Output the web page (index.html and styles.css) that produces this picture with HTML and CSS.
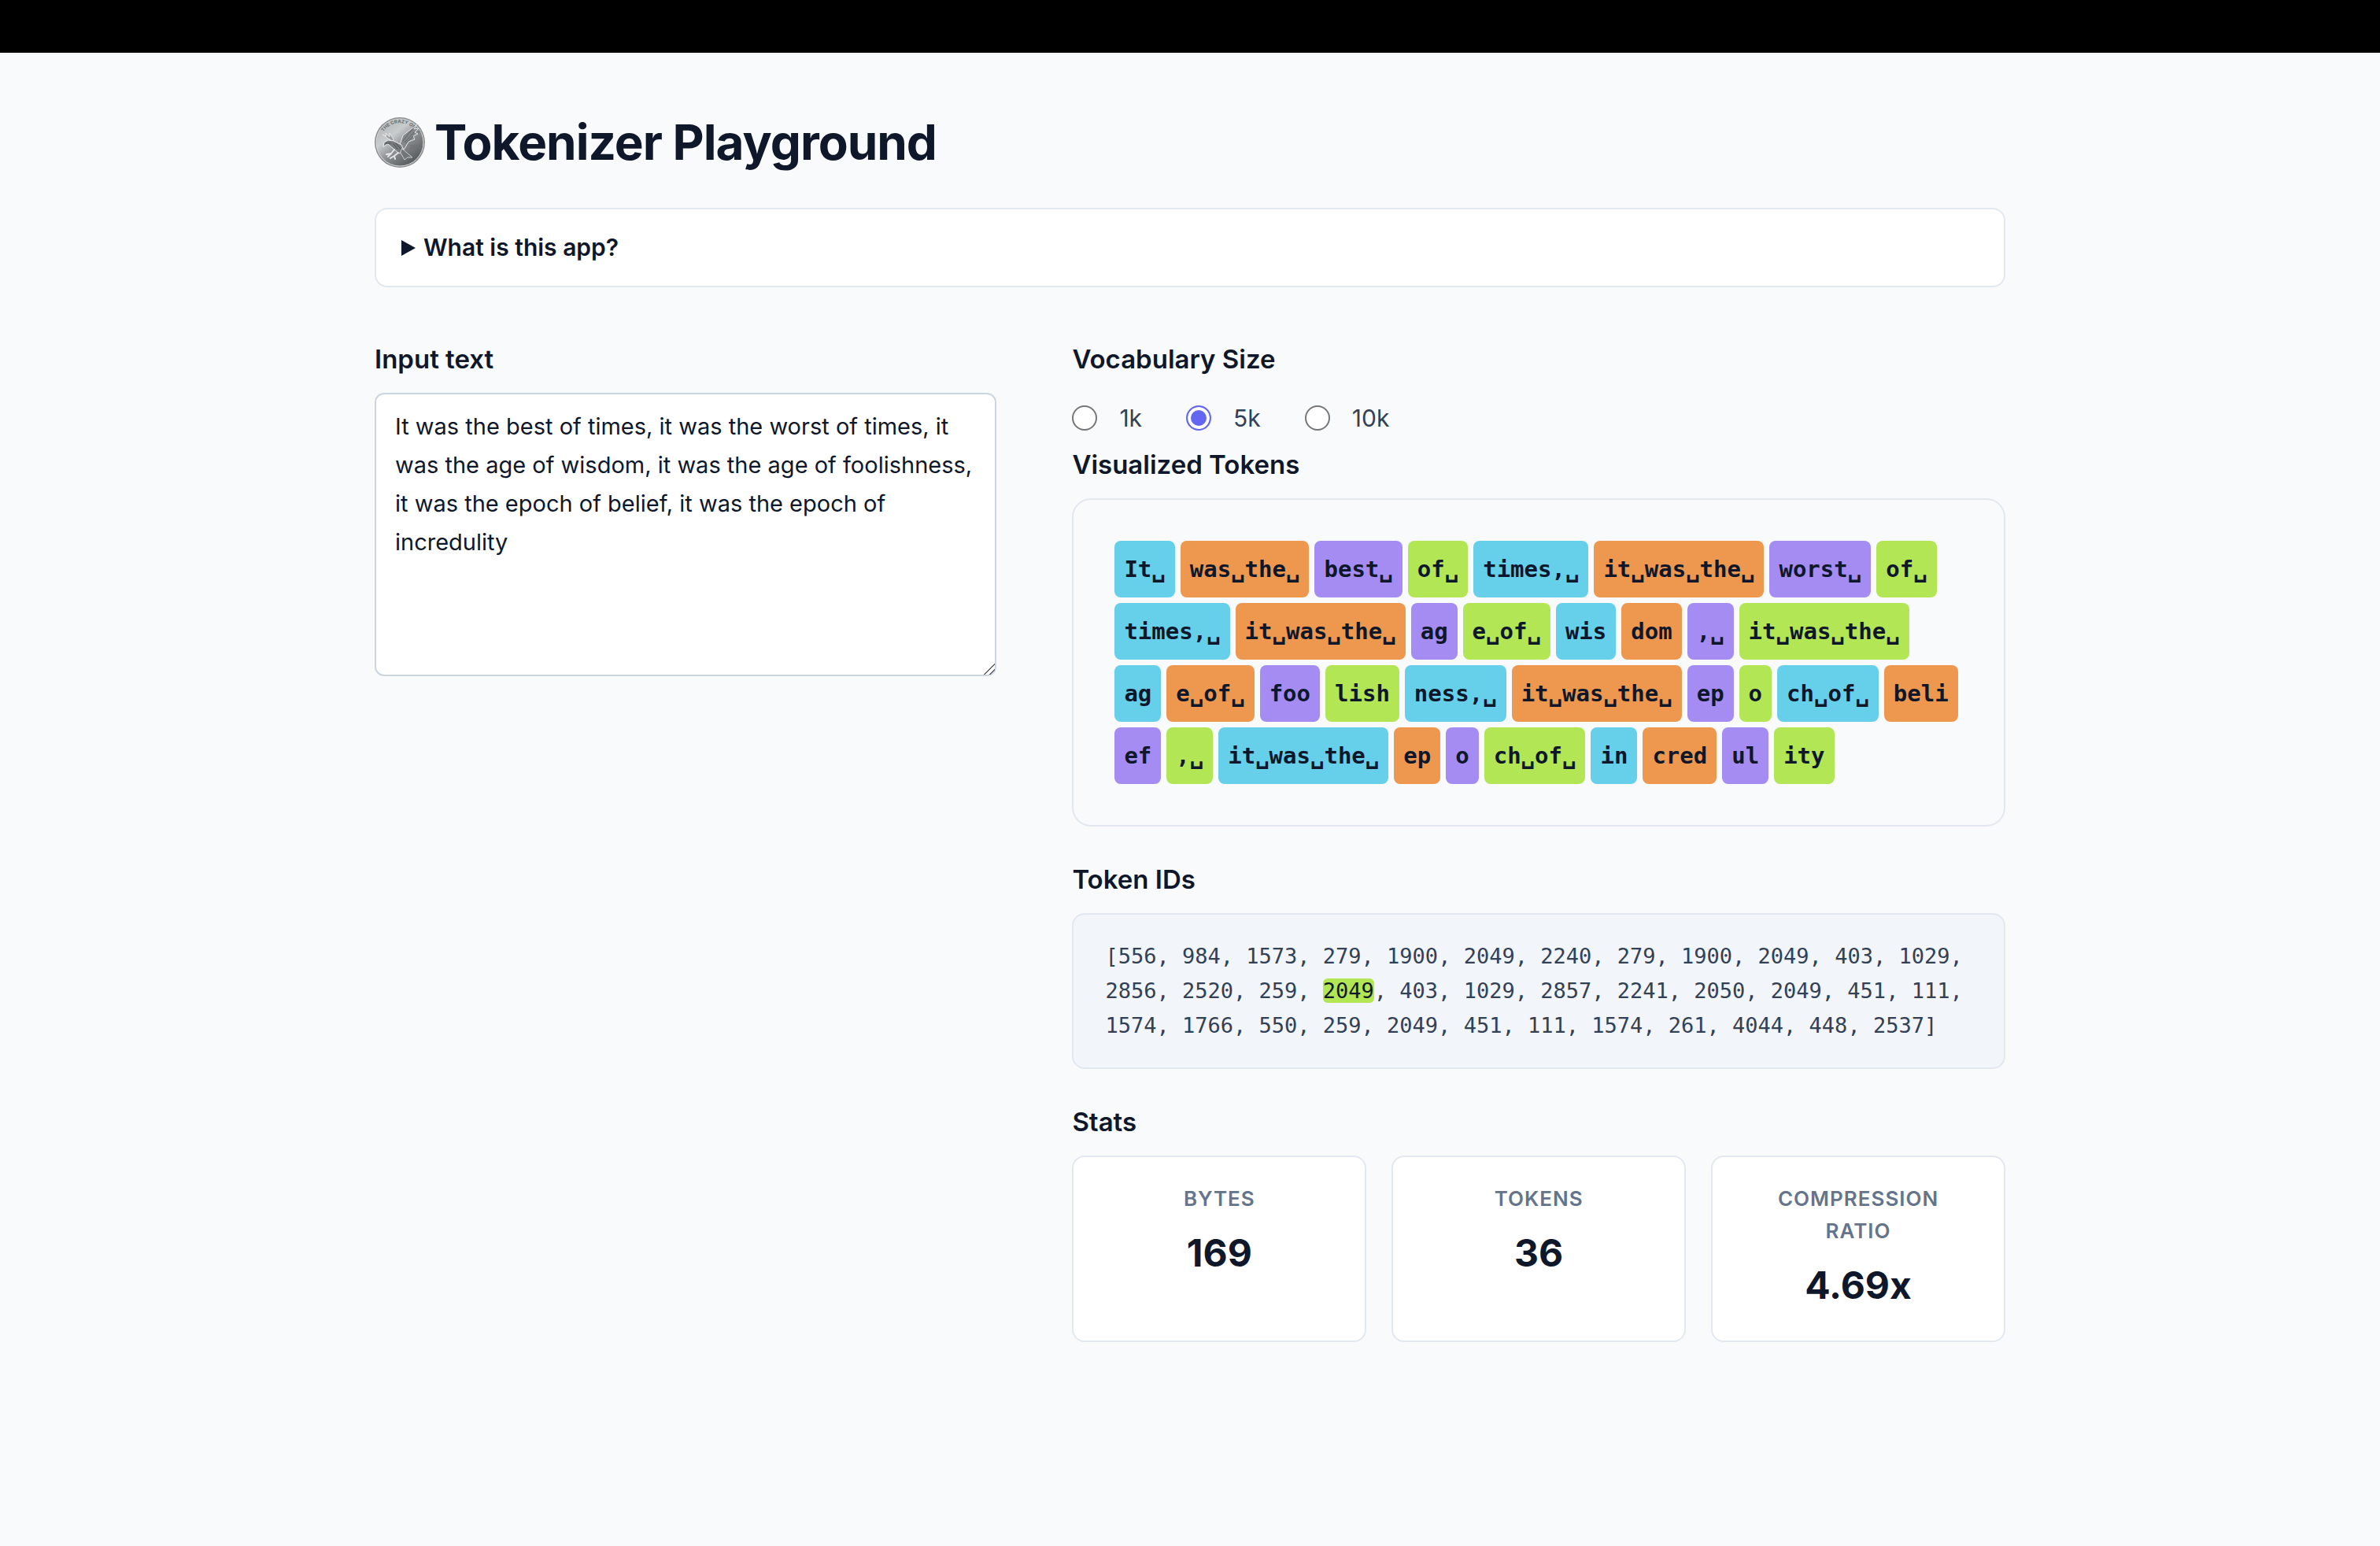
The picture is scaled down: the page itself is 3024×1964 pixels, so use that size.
FILE: index.html
```html
<!DOCTYPE html>
<html lang="en">
<head>
    <meta charset="UTF-8">
    <meta name="viewport" content="width=device-width, initial-scale=1.0">
    <title>Tokenizer Playground</title>
    <link rel="stylesheet" href="styles.css">
</head>
<body>
    <div class="top-bar"></div>

    <main class="container">
        <h1>
            <!-- Silver coin logo -->
            <svg class="coin" viewBox="0 0 64 64" aria-hidden="true">
                <defs>
                    <linearGradient id="silver" x1="0.1" y1="0.1" x2="0.8" y2="1">
                        <stop offset="0" stop-color="#b4b7b8"/>
                        <stop offset="0.3" stop-color="#c9cccd"/>
                        <stop offset="0.6" stop-color="#85898b"/>
                        <stop offset="1" stop-color="#4e5254"/>
                    </linearGradient>
                    <path id="arc" d="M11 18.5 A25 25 0 0 1 55.5 24"/>
                </defs>
                <circle cx="32" cy="32" r="32" fill="#8b8f90"/>
                <circle cx="32" cy="32" r="30" fill="url(#silver)" stroke="#d9dcdc" stroke-width="1"/>
                <text class="coin-text"><textPath href="#arc">THE CRAZY ONES</textPath></text>
                <text class="coin-text" x="44" y="40">2020</text>
                <g stroke-linecap="round" stroke-linejoin="round">
                    <path d="M31 38 L36 23 L54 9 L50 15 L56 14 L51 19 L55 21 L49 24 L51 28 L43 31 L38 40 Z" fill="#84888a" stroke="#e3e5e6" stroke-width="1"/>
                    <path d="M36 30 L48 15 M38 32 L50 19 M40 33 L49 24" fill="none" stroke="#5d6163" stroke-width="1"/>
                    <path d="M22 30 L10 22 L15 24 L14 20 L19 25 L19 20 L24 28 Z" fill="#9a9ea0" stroke="#e3e5e6" stroke-width="1"/>
                    <path d="M11 37 L12 32 L17 29 L24 30 L34 35 L37 42 L31 46 L24 40 L17 34 Z" fill="#777b7d" stroke="#eceeee" stroke-width="1"/>
                    <path d="M35 40 L48 51 L42 51 L38 54 L33 45 Z" fill="#717577" stroke="#c9cccd" stroke-width="1"/>
                    <path d="M25 41 L21 46 L15 47 M21 46 L17 50 M30 45 L25 49 L20 52 M25 49 L26 53" fill="none" stroke="#e3e5e6" stroke-width="2"/>
                    <path d="M14 33 L20 33 M24 34 L29 40 M27 33 L33 40" fill="none" stroke="#494d4f" stroke-width="1"/>
                </g>
            </svg>
            Tokenizer Playground
        </h1>

        <details class="about">
            <summary>What is this app?</summary>
            <p>Type some text and see how it is split into tokens.</p>
        </details>

        <div class="columns">
            <section>
                <h2><label for="input-text">Input text</label></h2>
                <textarea id="input-text" spellcheck="false">It was the best of times, it was the worst of times, it was the age of wisdom, it was the age of foolishness, it was the epoch of belief, it was the epoch of incredulity</textarea>
            </section>

            <section>
                <h2 id="vocab-title">Vocabulary Size</h2>
                <div class="radio-group" role="radiogroup" aria-labelledby="vocab-title">
                    <label><input type="radio" name="vocab" value="1k"> 1k</label>
                    <label><input type="radio" name="vocab" value="5k" checked> 5k</label>
                    <label><input type="radio" name="vocab" value="10k"> 10k</label>
                </div>

                <h2>Visualized Tokens</h2>
                <div class="tokens" id="tokens"></div>

                <h2>Token IDs</h2>
                <div class="token-ids" id="token-ids"></div>

                <h2>Stats</h2>
                <div class="stats">
                    <div class="stat">
                        <div class="stat-label">Bytes</div>
                        <div class="stat-value">169</div>
                    </div>
                    <div class="stat">
                        <div class="stat-label">Tokens</div>
                        <div class="stat-value">36</div>
                    </div>
                    <div class="stat">
                        <div class="stat-label">Compression Ratio</div>
                        <div class="stat-value">4.69x</div>
                    </div>
                </div>
            </section>
        </div>
    </main>

    <script src="script.js"></script>
</body>
</html>
```
FILE: styles.css
```css
* {
    box-sizing: border-box;
}

body {
    margin: 0;
    background-color: #f9fafc;
    color: #0f172a;
    font-family: Inter, "Liberation Sans", sans-serif;
    font-size: 30px;
    line-height: 49px;
}

.top-bar {
    height: 67px;
    background-color: #000;
}

.container {
    max-width: 2136px;
    margin: 0 auto;
    padding: 82px 32px;
}

h1 {
    display: flex;
    align-items: center;
    gap: 12px;
    margin: 0 0 51px;
    font-size: 62px;
    line-height: 64px;
    font-weight: 700;
    letter-spacing: -1px;
}

.coin {
    width: 64px;
    height: 64px;
}

.coin-text {
    fill: #6d7173;
    font-size: 6px;
    font-weight: 700;
    letter-spacing: 0;
}

h2 {
    margin: 0 0 16px;
    font-size: 33px;
    line-height: 54px;
    font-weight: 600;
}

/* Collapsible intro */
.about {
    padding: 24px 32px;
    margin-bottom: 64px;
    background-color: #fff;
    border: 2px solid #e2e8f0;
    border-radius: 16px;
}

.about summary {
    display: flex;
    align-items: center;
    gap: 10px;
    font-weight: 600;
    cursor: pointer;
}

.about summary::before {
    content: "";
    border-left: 18px solid #0f172a;
    border-top: 10px solid transparent;
    border-bottom: 10px solid transparent;
}

.about[open] summary::before {
    transform: rotate(90deg);
}

.columns {
    display: grid;
    grid-template-columns: 2fr 3fr;
    gap: 96px;
}

textarea {
    display: block;
    width: 100%;
    height: 360px;
    padding: 16px 24px;
    background-color: #fff;
    color: inherit;
    border: 2px solid #cbd5e1;
    border-radius: 12px;
    font: inherit;
    font-size: 29px;
    resize: vertical;
}

textarea::-webkit-resizer {
    background: linear-gradient(135deg, transparent 50%, #666 50%, #666 57%, transparent 57%, transparent 75%, #666 75%, #666 82%, transparent 82%);
}

/* Vocabulary radios */
.radio-group {
    display: flex;
    align-items: center;
    gap: 56px;
    height: 64px;
    color: #334155;
}

.radio-group label {
    display: flex;
    align-items: center;
    gap: 28px;
    cursor: pointer;
}

.radio-group input {
    appearance: none;
    width: 32px;
    height: 32px;
    margin: 0;
    background-color: #fff;
    border: 2px solid #767676;
    border-radius: 50%;
}

.radio-group input:checked {
    background-color: #6366f1;
    border-color: #6366f1;
    box-shadow: inset 0 0 0 4px #fff;
}

/* Tokens */
.tokens {
    display: flex;
    flex-wrap: wrap;
    gap: 7px;
    padding: 52px 56px 52px 52px;
    margin-bottom: 40px;
    border: 2px solid #e2e8f0;
    border-radius: 24px;
    font-family: "DejaVu Sans Mono", monospace;
    font-size: 29px;
    line-height: 72px;
    font-weight: 700;
}

.token {
    padding: 0 12px;
    border-radius: 8px;
}

.color-0 {
    background-color: #66d0eb;
}

.color-1 {
    background-color: #ed974f;
}

.color-2 {
    background-color: #a48cf3;
}

.color-3 {
    background-color: #b2e655;
}

.token-ids {
    padding: 31px 40px;
    margin-bottom: 40px;
    background-color: #f2f5fa;
    border: 2px solid #e2e8f0;
    border-radius: 16px;
    color: #334155;
    font-family: "DejaVu Sans Mono", monospace;
    font-size: 27px;
    line-height: 44px;
}

.token-ids .active {
    background-color: #b2e655;
    border-radius: 6px;
    color: #0f172a;
}

/* Stats */
.stats {
    display: grid;
    grid-template-columns: repeat(3, 1fr);
    gap: 32px;
}

.stat {
    padding: 32px 48px;
    background-color: #fff;
    border: 2px solid #e2e8f0;
    border-radius: 16px;
    text-align: center;
}

.stat-label {
    margin-bottom: 10px;
    color: #64748b;
    font-size: 26px;
    line-height: 41px;
    font-weight: 600;
    letter-spacing: 1px;
    text-transform: uppercase;
}

.stat-value {
    font-size: 48px;
    line-height: 77px;
    font-weight: 700;
}
```
FILE: script.js
```js
const tokens = [
    'It ', 'was the ', 'best ', 'of ', 'times, ', 'it was the ', 'worst ', 'of ',
    'times, ', 'it was the ', 'ag', 'e of ', 'wis', 'dom', ', ', 'it was the ',
    'ag', 'e of ', 'foo', 'lish', 'ness, ', 'it was the ', 'ep', 'o', 'ch of ', 'beli',
    'ef', ', ', 'it was the ', 'ep', 'o', 'ch of ', 'in', 'cred', 'ul', 'ity'
];

const tokenIds = [
    556, 984, 1573, 279, 1900, 2049, 2240, 279, 1900, 2049, 403, 1029,
    2856, 2520, 259, 2049, 403, 1029, 2857, 2241, 2050, 2049, 451, 111,
    1574, 1766, 550, 259, 2049, 451, 111, 1574, 261, 4044, 448, 2537
];

const activeIndex = 15; // Token highlighted in the ID list

// Spaces are shown as a visible open box
document.getElementById('tokens').innerHTML = tokens
    .map((token, i) => `<span class="token color-${i % 4}">${token.replace(/ /g, '␣')}</span>`)
    .join('');

document.getElementById('token-ids').innerHTML = '[' + tokenIds
    .map((id, i) => `<span class="${i === activeIndex ? 'active' : ''}">${id}</span>`)
    .join(', ') + ']';
```
